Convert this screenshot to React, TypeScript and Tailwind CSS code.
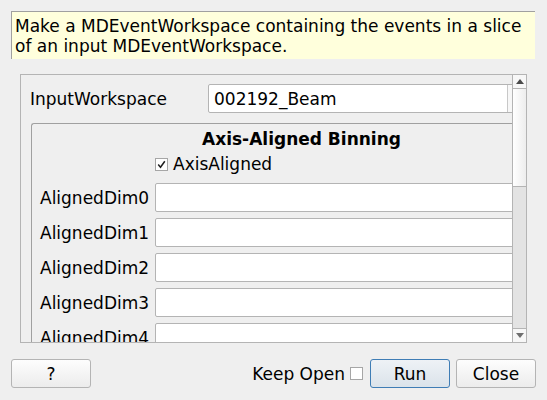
import React from "react";

function Check({ checked }: { checked: boolean }) {
  return (
    <div className="w-[13px] h-[13px] border border-[#a6a6a6] bg-white flex items-center justify-center shrink-0">
      {checked && (
        <svg width="9" height="9" viewBox="0 0 9 9">
          <path d="M1.2 4.6 L3.5 7.2 L7.8 1.2" fill="none" stroke="#1e1e1e" strokeWidth="1.5" />
        </svg>
      )}
    </div>
  );
}

function Field() {
  return <div className="h-[29px] w-[400px] bg-white border border-[#b4b4b4] rounded-[2px]" />;
}

export default function App() {
  const dims = ["AlignedDim0", "AlignedDim1", "AlignedDim2", "AlignedDim3", "AlignedDim4"];
  return (
    <div className="w-[547px] h-[400px] bg-[#efefef] font-['DejaVu_Sans',sans-serif] text-[17px] leading-[20px] text-[#000000] flex flex-col overflow-hidden">
      <div className="ml-[11px] mr-[12px] mt-[11px] border-t border-l border-[#a0a0a0] bg-[#ffffdc] pl-[3px] pt-[4px] pb-[3px]">
        Make a MDEventWorkspace containing the events in a slice of an input MDEventWorkspace.
      </div>

      <div className="ml-[20px] mt-[15px] w-[507px] h-[269px] border border-[#b4b4b4] flex">
        <div className="flex-1 overflow-hidden">
          <div className="w-[580px]">
            <div className="flex items-center pl-[9px] pt-[9px]">
              <div className="w-[178px]">InputWorkspace</div>
              <div className="h-[29px] w-[340px] bg-white border border-[#b4b4b4] rounded-[2px] flex">
                <div className="w-[298px] pl-[5px] flex items-center">002192_Beam</div>
                <div className="flex-1 border-l border-[#c8c8c8] bg-[#f7f7f7]" />
              </div>
            </div>
            <div className="ml-[10px] mt-[10px] w-[540px] h-[230px] border-t border-l border-[#a0a0a0] rounded-tl-[3px]">
              <div className="text-center font-bold mt-[5px]">Axis-Aligned Binning</div>
              <div className="flex items-center pl-[123px] mt-[5px] gap-[5px]">
                <Check checked />
                <span>AxisAligned</span>
              </div>
              <div className="flex flex-col gap-[6px] mt-[9px]">
                {dims.map((d) => (
                  <div key={d} className="flex items-center pl-[8px]">
                    <div className="w-[115px]">{d}</div>
                    <Field />
                  </div>
                ))}
              </div>
            </div>
          </div>
        </div>
        <div className="w-[14px] border-l border-[#b4b4b4] flex flex-col">
          <div className="h-[14px] border-b border-[#b4b4b4] bg-[#f7f7f7] flex items-center justify-center">
            <svg width="8" height="5" viewBox="0 0 8 5">
              <path d="M0 5 L4 0 L8 5 Z" fill="#4a4a4a" />
            </svg>
          </div>
          <div className="h-[98px] border-b border-[#b4b4b4] bg-gradient-to-r from-[#ffffff] to-[#ededed]" />
          <div className="flex-1 bg-[#e3e3e3]" />
          <div className="h-[14px] border-t border-[#b4b4b4] bg-[#f7f7f7] flex items-center justify-center">
            <svg width="8" height="5" viewBox="0 0 8 5">
              <path d="M0 0 L8 0 L4 5 Z" fill="#6e6e6e" />
            </svg>
          </div>
        </div>
      </div>

      <div className="flex items-center mt-[16px] pl-[11px] pr-[11px]">
        <button className="w-[80px] h-[29px] border border-[#b4b4b4] rounded-[3px] bg-gradient-to-b from-[#fdfdfd] to-[#ececec]">?</button>
        <div className="flex-1" />
        <span>Keep Open</span>
        <div className="ml-[5px] mr-[7px]">
          <Check checked={false} />
        </div>
        <button className="w-[80px] h-[29px] border border-[#3f7db5] rounded-[3px] bg-gradient-to-b from-[#eef2f6] to-[#dbe3ea]">Run</button>
        <button className="ml-[6px] w-[80px] h-[29px] border border-[#b4b4b4] rounded-[3px] bg-gradient-to-b from-[#fdfdfd] to-[#ececec]">Close</button>
      </div>
    </div>
  );
}
